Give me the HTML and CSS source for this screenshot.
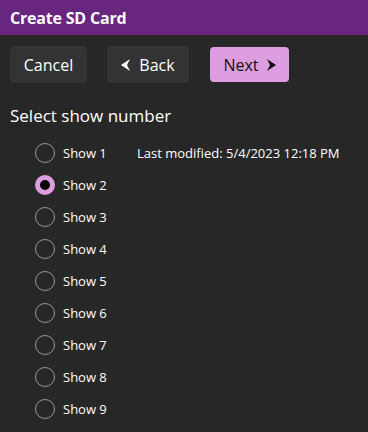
FILE: index.html
```html
<!DOCTYPE html>
<html lang="en">
<head>
  <meta charset="UTF-8" />
  <title>Create SD Card</title>
  <link rel="stylesheet" href="styles.css">
</head>
<body>
  <div class="titlebar">Create SD Card</div>

  <div class="toolbar">
    <button class="btn">Cancel</button>
    <button class="btn"><svg class="chev" width="9" height="12" viewBox="0 0 9 12"><path d="M9 0 L0 6 L9 12 L6 6 Z" fill="#fff"/></svg>Back</button>
    <button class="btn btn-next">Next<svg class="chev chev-right" width="9" height="12" viewBox="0 0 9 12"><path d="M0 0 L9 6 L0 12 L3 6 Z" fill="#111"/></svg></button>
  </div>

  <p class="prompt">Select show number</p>

  <div class="shows">
    <label class="show"><span class="radio"></span><span class="name">Show 1</span><span class="modified">Last modified: 5/4/2023 12:18 PM</span></label>
    <label class="show"><span class="radio checked"></span><span class="name">Show 2</span></label>
    <label class="show"><span class="radio"></span><span class="name">Show 3</span></label>
    <label class="show"><span class="radio"></span><span class="name">Show 4</span></label>
    <label class="show"><span class="radio"></span><span class="name">Show 5</span></label>
    <label class="show"><span class="radio"></span><span class="name">Show 6</span></label>
    <label class="show"><span class="radio"></span><span class="name">Show 7</span></label>
    <label class="show"><span class="radio"></span><span class="name">Show 8</span></label>
    <label class="show"><span class="radio"></span><span class="name">Show 9</span></label>
  </div>
</body>
</html>
```
FILE: styles.css
```css
body {
  margin: 0;
  height: 432px;
  background: #272727;
  color: #fff;
  font-family: 'Open Sans', 'Noto Sans', sans-serif;
  overflow: hidden;
}

.titlebar {   /* purple header */
  height: 35px;
  line-height: 37px;
  background: #68267f;
  padding-left: 10px;
  font-size: 16px;
  font-weight: 700;
  letter-spacing: -0.2px;
}

.toolbar {
  display: flex;
  align-items: center;
  padding: 11px 10px 0;
  gap: 20px;
}
.btn {
  display: flex;
  align-items: center;
  justify-content: center;
  height: 37px;
  padding: 0;
  border: none;
  border-radius: 4px;
  background: #333;
  color: #fff;
  font-family: inherit;
  font-size: 16px;
}
.btn:nth-child(1) { width: 77px; }
.btn:nth-child(2) { width: 82px; }
.btn-next {
  width: 79px;
  height: 35px;
  background: #dd9ee1;
  color: #111;
  margin-left: 1px;
}
.chev {
  margin-right: 9px;
}
.chev-right {
  margin: 0 0 0 8px;
}

.prompt {
  margin: 20px 0 0 10px;
  font-size: 17px;
  line-height: 26px;
}

.shows {
  margin: 8px 0 0 35px;
}
.show {
  display: flex;
  align-items: center;
  height: 32px;
  font-size: 13px;
}
.radio {
  box-sizing: border-box;
  width: 20px;
  height: 20px;
  border: 1px solid #9a9a9a;
  border-radius: 50%;
  margin-right: 8px;
}
.radio.checked {
  border: 5px solid #dd9ee1;
  background: #000;
}
.name {
  width: 74px;
}
.modified {
  font-size: 13px;
}
```
